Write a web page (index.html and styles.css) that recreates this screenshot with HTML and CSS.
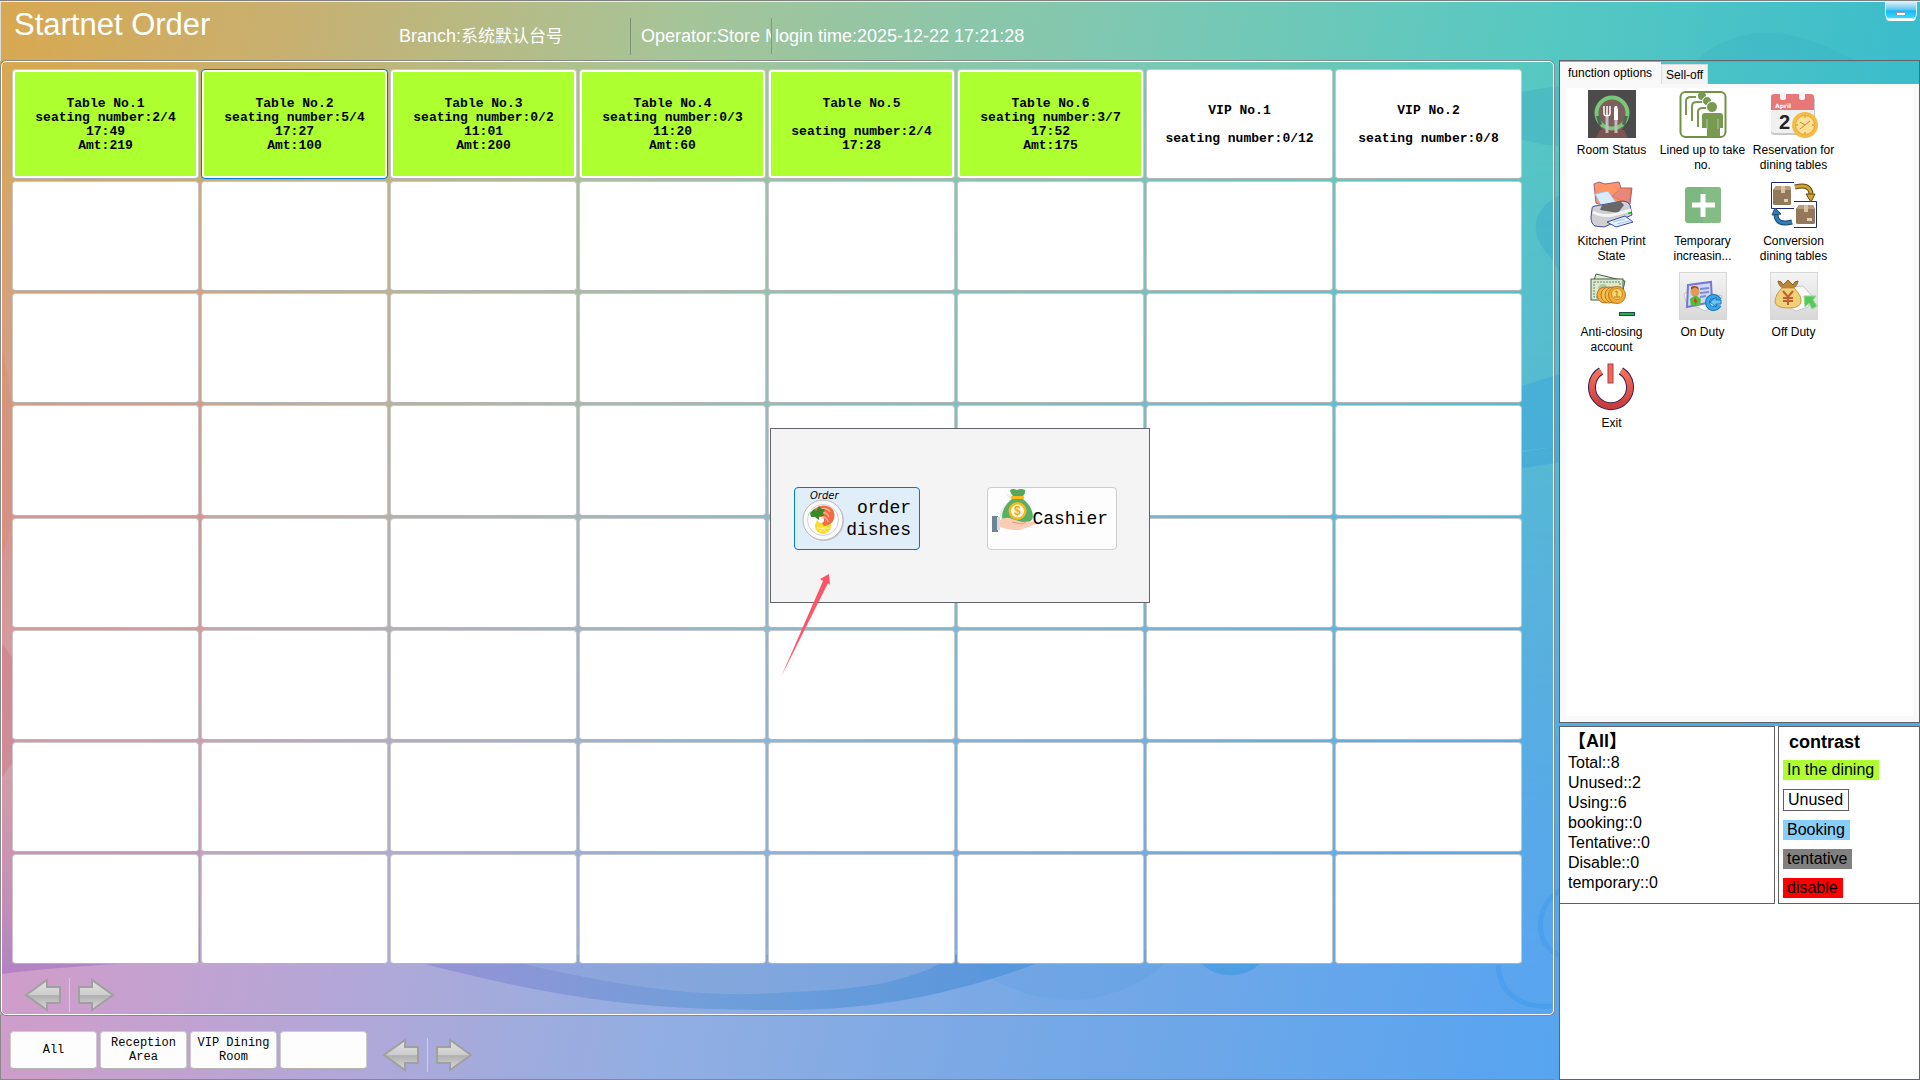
FILE: index.html
```html
<!DOCTYPE html>
<html lang="en">
<head>
    <meta charset="UTF-8">
    <title>Startnet Order</title>
    <link rel="stylesheet" href="styles.css">
</head>
<body>
    <svg class="backdrop" viewBox="0 0 1920 1080" preserveAspectRatio="none" aria-hidden="true">
        <defs>
            <linearGradient id="sky" x1="0" y1="0" x2="1" y2="0.12">
                <stop offset="0" stop-color="#d8a850"/>
                <stop offset="0.15" stop-color="#c8b070"/>
                <stop offset="0.35" stop-color="#a6c498"/>
                <stop offset="0.6" stop-color="#7ac8b4"/>
                <stop offset="0.8" stop-color="#56c8c2"/>
                <stop offset="1" stop-color="#3abccc"/>
            </linearGradient>
            <linearGradient id="sea" x1="0" y1="0" x2="1" y2="0.12">
                <stop offset="0.05" stop-color="#d49cc4"/>
                <stop offset="0.14" stop-color="#cc9ecc"/>
                <stop offset="0.3" stop-color="#b0a8d8"/>
                <stop offset="0.45" stop-color="#92aee2"/>
                <stop offset="0.65" stop-color="#76a8e6"/>
                <stop offset="0.92" stop-color="#56a4f0"/>
            </linearGradient>
            <linearGradient id="fade" x1="0" y1="0" x2="0" y2="1">
                <stop offset="0.08" stop-color="#000"/>
                <stop offset="0.9" stop-color="#fff"/>
            </linearGradient>
            <linearGradient id="wave" x1="0" y1="0" x2="1" y2="0">
                <stop offset="0" stop-color="#8878d0" stop-opacity="0.5"/>
                <stop offset="0.5" stop-color="#5090d0" stop-opacity="0.5"/>
                <stop offset="1" stop-color="#4088d8" stop-opacity="0.6"/>
            </linearGradient>
            <linearGradient id="rose" x1="0" y1="0" x2="0" y2="1">
                <stop offset="0" stop-color="#d08080" stop-opacity="0"/>
                <stop offset="0.4" stop-color="#c080a0" stop-opacity="0.3"/>
                <stop offset="1" stop-color="#a070c0" stop-opacity="0.6"/>
            </linearGradient>
            <linearGradient id="blush" x1="0" y1="0" x2="0" y2="1">
                <stop offset="0" stop-color="#d89888" stop-opacity="0"/>
                <stop offset="0.5" stop-color="#d89090" stop-opacity="0.7"/>
                <stop offset="1" stop-color="#d898b0" stop-opacity="0"/>
            </linearGradient>
            <mask id="lower"><rect width="1920" height="1080" fill="url(#fade)"/></mask>
        </defs>
        <rect width="1920" height="1080" fill="url(#sky)"/>
        <rect width="1920" height="1080" fill="url(#sea)" mask="url(#lower)"/>
        <rect y="120" width="205" height="820" fill="url(#blush)"/>
        <path d="M0 340C20 420 20 520 0 560z" fill="#d88868" opacity="0.3"/>
        <path d="M0 640L14 660V760L0 780z" fill="#c86870" opacity="0.3"/>
        <path d="M0 780L200 760V962Q100 962 0 974z" fill="url(#rose)"/>
        <path d="M390 955C560 1000 640 1010 780 1010C900 1010 980 985 1060 955z" fill="url(#wave)"/>
        <path d="M470 950C600 985 700 1000 790 992C880 990 930 975 960 950z" fill="#a0b4e4" opacity="0.4"/>
        <path d="M960 950C1000 1000 1060 1000 1080 1000C1130 995 1160 970 1180 950z" fill="#509ce0" opacity="0.18"/>
        <path d="M1195 955C1210 982 1250 982 1268 955z" fill="#3898e0" opacity="0.6"/>
        <path d="M1695 62C1720 34 1760 28 1790 34C1830 42 1850 62 1870 62z" fill="#38b0c4" opacity="0.3"/>
        <path d="M1520 92Q1540 86 1570 85V145Q1545 146 1520 138z" fill="#38a8c4" opacity="0.35"/>
        <path d="M1570 190C1530 205 1530 230 1545 250C1580 290 1560 330 1560 350z" fill="#28a0cc" opacity="0.3"/>
        <path d="M1520 386L1570 370V445L1520 450zM1520 452L1570 444V460L1520 468z" fill="#2898e0" opacity="0.3"/>
        <path d="M1560 890C1530 910 1538 950 1560 955M1498 965C1500 1000 1530 1008 1552 1006" fill="none" stroke="#3898ec" stroke-width="5" opacity="0.4"/>
    </svg>

    <header class="topbar">
        <h1>Startnet Order</h1>
        <span class="info branch">Branch:<span class="store-name">系统默认台号</span></span>
        <span class="info operator">Operator:Store M</span>
        <span class="info login">login time:2025-12-22 17:21:28</span>
        <button class="minimize" aria-label="Minimize"><span></span></button>
    </header>

    <main class="workspace">
        <div class="left">
            <section class="floor">
                <div class="tables" id="tables">
                    <button class="table using">Table No.1<br>seating number:2/4<br>17:49<br>Amt:219</button>
                    <button class="table using active">Table No.2<br>seating number:5/4<br>17:27<br>Amt:100</button>
                    <button class="table using">Table No.3<br>seating number:0/2<br>11:01<br>Amt:200</button>
                    <button class="table using">Table No.4<br>seating number:0/3<br>11:20<br>Amt:60</button>
                    <button class="table using">Table No.5<br><br>seating number:2/4<br>17:28</button>
                    <button class="table using">Table No.6<br>seating number:3/7<br>17:52<br>Amt:175</button>
                    <button class="table">VIP No.1<br><br>seating number:0/12</button>
                    <button class="table">VIP No.2<br><br>seating number:0/8</button>
                </div>
                <div class="pager">
                    <button aria-label="Previous tables"><svg width="38" height="34" viewBox="0 0 38 34"><use href="#arrow"/></svg></button>
                    <button class="next" aria-label="Next tables"><svg width="38" height="34" viewBox="0 0 38 34"><use href="#arrow"/></svg></button>
                </div>
            </section>
            <nav class="areas">
                <button class="area">All</button>
                <button class="area">Reception<br>Area</button>
                <button class="area">VIP Dining<br>Room</button>
                <button class="area" aria-label="Empty area"></button>
                <div class="pager">
                    <button aria-label="Previous areas"><svg width="38" height="34" viewBox="0 0 38 34"><use href="#arrow"/></svg></button>
                    <button class="next" aria-label="Next areas"><svg width="38" height="34" viewBox="0 0 38 34"><use href="#arrow"/></svg></button>
                </div>
            </nav>
        </div>

        <aside class="side">
            <div class="options">
                <div class="tabs">
                    <button class="tab selected">function options</button>
                    <button class="tab">Sell-off</button>
                </div>
                <div class="tab-page">
                    <div class="functions">
                        <button class="func">
                            <svg width="48" height="48" viewBox="0 0 48 48">
                                <rect width="48" height="48" fill="#4c4a4b"/>
                                <ellipse cx="24" cy="25" rx="15" ry="19" fill="#7c605e"/>
                                <path d="M12 40L36 40L40 48H8z" fill="#7c5450"/>
                                <circle cx="24" cy="23" r="15.500" fill="none" stroke="#78c878" stroke-width="4"/>
                                <path d="M8 26l4 0 2 8-3 2zM40 26l-4 0-2 8 3 2z" fill="#4c6e50"/>
                                <path d="M16 16v7q0 3 3 3q3 0 3-3v-7M19 16v10" fill="none" stroke="#fff" stroke-width="1.500"/>
                                <path d="M26 30V18q1-3 3-2l1 4v10z" fill="#fff"/>
                                <path d="M19 27v16M28 30v13" stroke="#c4bcbc" stroke-width="3"/>
                            </svg>
                            Room Status
                        </button>
                        <button class="func">
                            <svg width="48" height="48" viewBox="0 0 48 48">
                                <rect x="1.500" y="2" width="45" height="45" rx="5" fill="#fff" stroke="#6f9440" stroke-width="2"/>
                                <path d="M7 25V11q0-4 5-4h5M13 31V16q0-4 5-4h5M19 37V22q0-4 5-4h4" fill="none" stroke="#789a50" stroke-width="2"/>
                                <circle cx="23" cy="6" r="4" fill="#789a50"/>
                                <circle cx="28" cy="11" r="4.500" fill="#789a50" stroke="#fff"/>
                                <circle cx="33" cy="17" r="5.500" fill="#789a50" stroke="#fff"/>
                                <path d="M23 26q0-3 3-3h15q3 0 3 3v12h-3v9H28V38h-5z" fill="#789a50"/>
                                <path d="M28 29v10M39 29v10" stroke="#b4c8a0"/>
                            </svg>
                            Lined up to take no.
                        </button>
                        <button class="func">
                            <svg width="48" height="48" viewBox="0 0 48 48">
                                <rect x="1" y="7" width="44" height="38" rx="3" fill="#c8c8c8"/>
                                <rect x="1" y="5" width="43" height="38" rx="3" fill="#f0f0f0"/>
                                <path d="M1 20V7q0-3 3-3h37q3 0 3 3v13z" fill="#e87878"/>
                                <rect x="10" y="2" width="6" height="8" rx="2" fill="#f4f4f4"/>
                                <rect x="29" y="2" width="6" height="8" rx="2" fill="#f4f4f4"/>
                                <text x="5" y="18" class="cal-month">April</text>
                                <text x="9" y="39" class="cal-day">2</text>
                                <circle cx="35" cy="35" r="13" fill="#f4bc40"/>
                                <circle cx="35" cy="35" r="9.500" fill="#fce098" stroke="#e8a838"/>
                                <path d="M30 32l5 3 5-4M30 39l5-4M35 26v2M35 42v2M26 35h2M42 35h2" fill="none" stroke="#c88828"/>
                            </svg>
                            Reservation for dining tables
                        </button>
                        <button class="func">
                            <svg width="48" height="48" viewBox="0 0 48 48">
                                <path d="M6 3l5-2 6 2 14-2 2 6 11 0-2 16-8-2-4 8L8 22z" fill="#ff9468" stroke="#a06080"/>
                                <path d="M33 7l10 1-2 14-8-2-9-5z" fill="#e88878" stroke="#d06040" stroke-width="0.500"/>
                                <path d="M7 13l13-3 9 13-14 5z" fill="#d8ecff" stroke="#a0c0e0"/>
                                <path d="M4 28q-1-2 3-3l28-5q5 0 7 4l2 10-28 12-9-1q-4-2-4-9z" fill="#d0d0d4" stroke="#4848a0"/>
                                <path d="M14 24l18-4 4 4-6 8-18-3z" fill="#686868"/>
                                <path d="M5 31q9 5 20 3l18-5" fill="none" stroke="#f4f4f4" stroke-width="3"/>
                                <path d="M19 41l18-6 8 6-17 5z" fill="#e4f2ff" stroke="#3848b0"/>
                                <path d="M25 41l12-3M29 43l12-3" stroke="#a0c4e8"/>
                                <rect x="40" y="31" width="3" height="2" fill="#30c850"/>
                            </svg>
                            Kitchen Print State
                        </button>
                        <button class="func">
                            <svg width="48" height="48" viewBox="0 0 48 48">
                                <rect x="6" y="6" width="36" height="36" rx="3" fill="#7cb880"/>
                                <path d="M24 6h15q3 0 3 3v30q0 3-3 3H24z" fill="#88be88" opacity="0.600"/>
                                <path d="M24 13v23M13 24h23" stroke="#fff" stroke-width="5"/>
                            </svg>
                            Temporary increasin...
                        </button>
                        <button class="func">
                            <svg width="48" height="48" viewBox="0 0 48 48">
                                <path d="M24 1.500H1.500v26H24M24 20.500H46.500v26H24" fill="none" stroke="#202878"/>
                                <path d="M6 5h14l1 4v14q0 1-2 1H5q-2 0-2-1V9z" fill="#94785a"/>
                                <path d="M6 5h14l1 4H3z" fill="#b89c7c"/>
                                <path d="M11 5h4v7h-4z" fill="#d8c4a0"/>
                                <rect x="14" y="18" width="4" height="3" fill="#e0d0b8"/>
                                <path d="M29 24h14l2 4v14q0 1-2 1H28q-2 0-2-1V28z" fill="#94785a"/>
                                <path d="M29 24h14l2 4H26z" fill="#b89c7c"/>
                                <path d="M34 24h4v7h-4z" fill="#d8c4a0"/>
                                <rect x="37" y="37" width="5" height="3" fill="#e0d0b8"/>
                                <path d="M25 6Q40 2 41 13" fill="none" stroke="#58481c" stroke-width="5"/>
                                <path d="M25 6Q40 2 41 13" fill="none" stroke="#d8a428" stroke-width="3"/>
                                <path d="M36 13h9l-4 8z" fill="#d8a428" stroke="#58481c"/>
                                <path d="M6 33Q6 45 22 41" fill="none" stroke="#204878" stroke-width="5"/>
                                <path d="M6 33Q6 45 22 41" fill="none" stroke="#2c80b8" stroke-width="3"/>
                                <path d="M2 34l3-7 6 6z" fill="#2c80b8" stroke="#204878"/>
                            </svg>
                            Conversion dining tables
                        </button>
                        <button class="func">
                            <svg width="48" height="48" viewBox="0 0 48 48">
                                <path d="M8 2l29 7-2 9L5 11z" fill="#e4ecdc" stroke="#486048"/>
                                <rect x="3" y="7" width="32" height="21" fill="#dce8d0" stroke="#486048"/>
                                <rect x="6" y="10" width="26" height="15" fill="none" stroke="#68885c" stroke-dasharray="2 1"/>
                                <circle cx="15" cy="17" r="5" fill="#b0c8a4"/>
                                <circle cx="17" cy="23" r="8" fill="#f4b040" stroke="#b87820"/>
                                <circle cx="21" cy="23" r="8" fill="#f8c050" stroke="#b87820"/>
                                <circle cx="25" cy="23" r="8" fill="#f8b848" stroke="#b87820"/>
                                <circle cx="29" cy="23" r="8.500" fill="#f4ac38" stroke="#b87820"/>
                                <circle cx="29" cy="22" r="5.500" fill="#fcd468" stroke="#c88c28"/>
                                <path d="M26 25h6M29 25v-6l-2 1" fill="none" stroke="#b87820"/>
                                <rect x="31.500" y="40.500" width="15" height="3" fill="#28b048" stroke="#185048"/>
                            </svg>
                            Anti-closing account
                        </button>
                        <button class="func">
                            <svg width="48" height="48" viewBox="0 0 48 48">
                                <rect x="0.500" y="0.500" width="47" height="47" fill="url(#tile)" stroke="#d8d8d8"/>
                                <path d="M5 22l8-4 30 6-2 6-15 9-19-9z" fill="#f8f8f8" stroke="#c4c4c4"/>
                                <path d="M9 13l23-3 1 20-25 5z" fill="#d0d8f8" stroke="#7478d0" stroke-width="2"/>
                                <path d="M21 17l9-1M21 21l9-1M21 25l6-1" stroke="#7c8ccc" stroke-width="2"/>
                                <circle cx="16" cy="20" r="4.500" fill="#e89858"/>
                                <path d="M12 18q4-5 8 0l-1-3q-4-2-7 0z" fill="#985018"/>
                                <path d="M11 27l4-3h3l4 3-1 6-9 1z" fill="#50c030"/>
                                <path d="M16 25l2 4-1 3-2-3z" fill="#e83030"/>
                                <path d="M40 28a6 6 0 1 0 0 5" fill="none" stroke="#1878c0" stroke-width="5"/>
                                <path d="M40 28a6 6 0 1 0 0 5" fill="none" stroke="#38a8e8" stroke-width="3"/>
                                <path d="M31 30l6-5v3h5v4h-5v3z" fill="#68c4f4" stroke="#1878c0"/>
                            </svg>
                            On Duty
                        </button>
                        <button class="func">
                            <svg width="48" height="48" viewBox="0 0 48 48">
                                <rect x="0.500" y="0.500" width="47" height="47" fill="url(#tile)" stroke="#d8d8d8"/>
                                <path d="M22 15l11-1 9 10-4 11-12 4-8-4z" fill="#fafafa" stroke="#c8c8c8"/>
                                <path d="M8 9q4 0 5 4l5-5 5 5q1-4 5-4-1 6-6 7h-8q-5-1-6-7z" fill="#b8863c" stroke="#906020"/>
                                <path d="M12 16h12q8 8 7 14-1 6-13 6T5 30q0-7 7-14z" fill="#f0d078" stroke="#c89c40"/>
                                <path d="M13 19l5 6 5-6M18 25v8M13 26h10M13 29h10" fill="none" stroke="#c06030" stroke-width="2"/>
                                <path d="M34 24h12l-3 4 4 6-5 3-3-6-4 4z" fill="#58c858" stroke="#90dc90"/>
                            </svg>
                            Off Duty
                        </button>
                        <button class="func">
                            <svg width="48" height="48" viewBox="0 0 48 48">
                                <path d="M13 8A19 19 0 1 0 33 8" fill="none" stroke="#302058" stroke-width="8"/>
                                <path d="M13 8A19 19 0 1 0 33 8" fill="none" stroke="url(#power)" stroke-width="6"/>
                                <rect x="20" y="1" width="5" height="19" fill="#f86850" stroke="#a04050"/>
                            </svg>
                            Exit
                        </button>
                    </div>
                </div>
            </div>
            <div class="summary">
                <section class="totals">
                    <h2>【All】</h2>
                    <ul>
                        <li>Total::8</li>
                        <li>Unused::2</li>
                        <li>Using::6</li>
                        <li>booking::0</li>
                        <li>Tentative::0</li>
                        <li>Disable::0</li>
                        <li>temporary::0</li>
                    </ul>
                </section>
                <section class="legend">
                    <h2>contrast</h2>
                    <span class="tag dining">In the dining</span>
                    <span class="tag unused">Unused</span>
                    <span class="tag booking">Booking</span>
                    <span class="tag tentative">tentative</span>
                    <span class="tag disable">disable</span>
                </section>
            </div>
            <div class="filler"></div>
        </aside>
    </main>

    <div class="dialog" role="dialog" aria-label="Table action">
        <button class="action focused">
            <svg class="plate" width="42" height="50" viewBox="0 0 42 50">
                <text x="8" y="8" class="plate-label">Order</text>
                <circle cx="22" cy="30" r="20" fill="#c4ccd4"/>
                <circle cx="21" cy="29" r="20" fill="#fafafa" stroke="#b8b8b8"/>
                <circle cx="21" cy="29" r="15.500" fill="#fff" stroke="#d0d0d0"/>
                <circle cx="21" cy="35" r="8" fill="#f8dc30"/>
                <path d="M15 37l12 0M21 37l-4 5M21 37l4 5" stroke="#fff4a0"/>
                <path d="M12 18q8-6 16-2 6 4 4 12-2 6-10 7-4-6-7-8-5-3-3-9z" fill="#f46c44"/>
                <path d="M16 19q8-4 12 2M18 22q6-2 9 4M20 26q5 0 6 5" fill="none" stroke="#fcb498" stroke-width="1.500"/>
                <circle cx="19" cy="29" r="3" fill="#fff"/>
                <path d="M8 22l4-4 2 2 3-5 3 3 3 0-2 4 1 3-5 0 0 4-4-3-4 0z" fill="#388c28"/>
            </svg>
            <span>order<br>dishes</span>
        </button>
        <button class="action">
            <svg class="bag" width="48" height="46" viewBox="0 0 48 46">
                <path d="M13 4l6 3 2 24-10 3q-6-8 0-16 4-4 7-8z" fill="#d8d8d8" opacity="0.500"/>
                <path d="M18 1q3-2 7 0 4-2 8 0 1 3-2 6H21q-3-3-3-6z" fill="#54a85c"/>
                <rect x="19" y="7" width="13" height="3" rx="1" fill="#f8b818"/>
                <path d="M20 10h11q9 7 10 17 0 7-10 7H19q-9 0-9-7 1-10 10-17z" fill="#58b064"/>
                <circle cx="25.500" cy="22" r="9" fill="#f4b820"/>
                <circle cx="25.500" cy="22" r="6.500" fill="#fffbe8"/>
                <text x="22" y="26" class="dollar">$</text>
                <path d="M8 31q7-4 12-1l10 3 13-1q4 1 1 3l-16 6q-10 1-20-3z" fill="#fcccb4"/>
                <path d="M20 33l10 2 4-2" fill="none" stroke="#e89c80"/>
                <rect x="0" y="27" width="6" height="16" fill="#6c8494"/>
                <rect x="5" y="28" width="3" height="13" fill="#d4dce0"/>
            </svg>
            <span>Cashier</span>
        </button>
        <svg class="pointer" width="50" height="106" viewBox="0 0 50 106" aria-hidden="true">
            <path d="M0 105L42 9L39 7L48 2L49 13L47 11z" fill="#ff5468"/>
        </svg>
    </div>

    <svg class="defs" width="0" height="0" aria-hidden="true">
        <defs>
            <linearGradient id="steel" x1="0" y1="0" x2="0" y2="1">
                <stop offset="0" stop-color="#e4e4e4"/>
                <stop offset="0.5" stop-color="#cccccc"/>
                <stop offset="0.52" stop-color="#b0b0b0"/>
                <stop offset="1" stop-color="#dcdcdc"/>
            </linearGradient>
            <linearGradient id="tile" x1="0" y1="0" x2="0" y2="1">
                <stop offset="0" stop-color="#f4f4f4"/>
                <stop offset="1" stop-color="#d8d8d8"/>
            </linearGradient>
            <linearGradient id="power" x1="0" y1="0" x2="0" y2="1">
                <stop offset="0" stop-color="#fc7058"/>
                <stop offset="1" stop-color="#c83c3c"/>
            </linearGradient>
            <path id="arrow" d="M2 17L23 2V9H36V25H23V32z" fill="url(#steel)" stroke="#a0a0a0" stroke-width="2"/>
        </defs>
    </svg>

    <script>
        // fill the rest of the 8 x 8 floor plan with empty places
        const tables = document.getElementById('tables');
        for (let i = tables.children.length; i < 64; i++) {
            const place = document.createElement('button');
            place.className = 'table';
            place.setAttribute('aria-label', 'Empty place ' + (i + 1));
            tables.appendChild(place);
        }
    </script>
</body>
</html>
```

FILE: styles.css
```css
* {
    margin: 0;
    padding: 0;
    box-sizing: border-box;
}
body {
    position: relative;
    display: flex;
    flex-direction: column;
    min-height: 100vh;
    font-family: "Liberation Sans", "Noto Sans CJK SC", sans-serif;
    color: #000;
    border-top: 1px solid #808080;
}
button {
    font-family: inherit;
    color: inherit;
    background: none;
    border: none;
    cursor: pointer;
}
.backdrop {
    position: absolute;
    top: 0;
    left: 0;
    width: 100%;
    height: 100%;
    z-index: -1;
}
.defs {
    position: absolute;
}

/* header */
.topbar {
    display: flex;
    align-items: flex-start;
    height: 60px;
    padding-left: 13px;
    border-top: 1px solid #e8f0ec;
    border-left: 1px solid #ddd;
    color: #fff;
}
.topbar h1 {
    width: 385px;
    padding-top: 5px;
    font-size: 31px;
    font-weight: normal;
    line-height: 36px;
}
.info {
    margin-top: 16px;
    font-size: 18px;
    line-height: 36px;
    white-space: nowrap;
    overflow: hidden;
}
.branch {
    width: 232px;
    border-right: 1px solid #7c9474;
}
.store-name {
    font-size: 17px;
}
.operator {
    width: 141px;
    padding-left: 10px;
    border-right: 1px solid #70a090;
}
.login {
    padding-left: 3px;
}
.minimize {
    display: flex;
    align-items: flex-end;
    justify-content: center;
    width: 32px;
    height: 17px;
    margin-left: auto;
    margin-right: 3px;
    padding-bottom: 2px;
    background: linear-gradient(#d8f0fa, #58c4f0 50%, #18b8f8 55%, #38d8ff);
    border: 1px solid #d8f4fc;
    border-top: none;
    border-radius: 0 0 5px 5px;
    box-shadow: 0 3px 0 -1px #fff;
}
.minimize span {
    width: 10px;
    height: 4px;
    background: #fff;
    border: 1px solid #a0a0a0;
}

/* left side */
.workspace {
    display: flex;
    flex: 1;
}
.left {
    display: flex;
    flex-direction: column;
    flex: 1;
    padding-right: 5px;
}
.floor {
    display: flex;
    flex-direction: column;
    flex: 1;
    padding: 7px 31px 0 10px;
    border: 1px solid #fff;
    border-radius: 5px;
    margin-left: 1px;
    box-shadow: 0 0 0 1px #888;
}
.tables {
    display: grid;
    grid-template-columns: repeat(8, 1fr);
    grid-auto-rows: 1fr;
    gap: 2px;
    flex: 1;
}
.table {
    min-height: 60px;
    padding-top: 2px;
    background: #fff;
    border: 1px solid #c8c8c8;
    border-bottom-color: #b4b4b4;
    border-radius: 4px;
    font-family: "Liberation Mono", monospace;
    font-size: 13px;
    font-weight: bold;
    line-height: 14px;
}
.table.using {
    background: #adff2f;
    box-shadow: inset 0 0 0 2px #fff;
}
.table.active {
    border-color: #0078d4;
}
.pager {
    display: flex;
}
.pager button {
    display: flex;
    align-items: center;
    justify-content: center;
    width: 52px;
    height: 34px;
}
.pager button + button {
    border-left: 1px solid #d8c8e4;
}
.pager .next svg {
    transform: scaleX(-1);
}
.floor .pager {
    padding: 14px 0 2px 5px;
}
.areas {
    display: flex;
    align-items: center;
    gap: 3px;
    height: 65px;
    padding: 5px 0 0 9px;
    border-left: 1px solid #888;
    border-bottom: 1px solid #888;
}
.area {
    width: 87px;
    height: 38px;
    background: #fdfdfd;
    border: 1px solid #ccc;
    border-bottom-color: #b4b4b4;
    border-radius: 4px;
    font-family: "Liberation Mono", monospace;
    font-size: 12px;
    line-height: 14px;
}
.areas .pager {
    padding: 10px 0 0 5px;
}

/* right side */
.side {
    display: flex;
    flex-direction: column;
    width: 361px;
    margin-top: -1px;
}
.options {
    display: flex;
    flex-direction: column;
    flex: 1;
    border: 1px solid #606468;
}
.tabs {
    display: flex;
    align-items: flex-end;
    height: 23px;
}
.tab {
    height: 20px;
    padding: 0 4px;
    background: #f3f3f3;
    border: 1px solid #dcdcdc;
    border-bottom: none;
    font-size: 12px;
}
.tab.selected {
    height: 22px;
    padding: 0 9px 0 8px;
    background: #f9f9f9;
    border: none;
}
.tab-page {
    flex: 1;
    padding: 4px 6px 6px;
    background: #f9f9f9;
}
.functions {
    display: grid;
    grid-template-columns: repeat(auto-fill, 91px);
    grid-auto-rows: 91px;
    height: 100%;
    align-content: start;
    background: #fff;
}
.func {
    display: flex;
    flex-direction: column;
    align-items: center;
    gap: 5px;
    padding-top: 2px;
    font-size: 12px;
    line-height: 15px;
}
.func svg {
    flex-shrink: 0;
}
.cal-month {
    font: bold 6px "DejaVu Sans", sans-serif;
    fill: #fff;
}
.cal-day {
    font: bold 20px "Liberation Sans", sans-serif;
    fill: #222;
}
.summary {
    display: flex;
    gap: 3px;
    margin-top: 3px;
    background: #fff;
}
.summary section {
    height: 178px;
    border: 1px solid #606060;
    background: #fff;
}
.summary h2 {
    font-size: 18px;
    line-height: 24px;
}
.totals {
    flex: 1;
    padding: 2px 8px;
}
.totals li {
    list-style: none;
    font-size: 16px;
    line-height: 20px;
}
.legend {
    display: flex;
    flex-direction: column;
    align-items: flex-start;
    gap: 9px;
    width: 142px;
    padding: 3px 4px;
}
.legend h2 {
    padding-left: 6px;
    margin-bottom: -3px;
}
.tag {
    padding: 0 5px 0 4px;
    font-size: 16px;
    line-height: 20px;
}
.dining {
    background: #adff2f;
}
.unused {
    border: 1px solid #606060;
}
.booking {
    background: #87cefa;
}
.tentative {
    background: #808080;
}
.disable {
    background: #ff0000;
}
.filler {
    height: 176px;
    background: #fff;
    border: 1px solid #606468;
    border-top: none;
}

/* table action dialog */
.dialog {
    position: absolute;
    top: 427px;
    left: 50%;
    display: flex;
    align-items: center;
    justify-content: space-between;
    width: 380px;
    height: 175px;
    margin-left: -190px;
    padding: 6px 32px 0 23px;
    background: #f4f4f4;
    border: 1px solid #606468;
}
.action {
    display: flex;
    align-items: center;
    justify-content: space-between;
    width: 126px;
    height: 63px;
    padding: 0 8px 0 7px;
    background: #fdfdfd;
    border: 1px solid #ccc;
    border-radius: 4px;
    font-family: "Liberation Mono", monospace;
    font-size: 18px;
    line-height: 22px;
    text-align: right;
}
.action.focused {
    background: #e0eef9;
    border-color: #0078d4;
}
.action:not(.focused) {
    width: 130px;
    padding-left: 4px;
}
.action span {
    z-index: 1;
}
.plate {
    margin-bottom: 6px;
}
.bag {
    margin-right: -8px;
    margin-bottom: 14px;
}
.plate-label {
    font: italic 10px "DejaVu Sans", sans-serif;
}
.dollar {
    font: bold 12px "Liberation Sans", sans-serif;
    fill: #f0a818;
}
.pointer {
    position: absolute;
    left: 10px;
    top: 143px;
}
```
